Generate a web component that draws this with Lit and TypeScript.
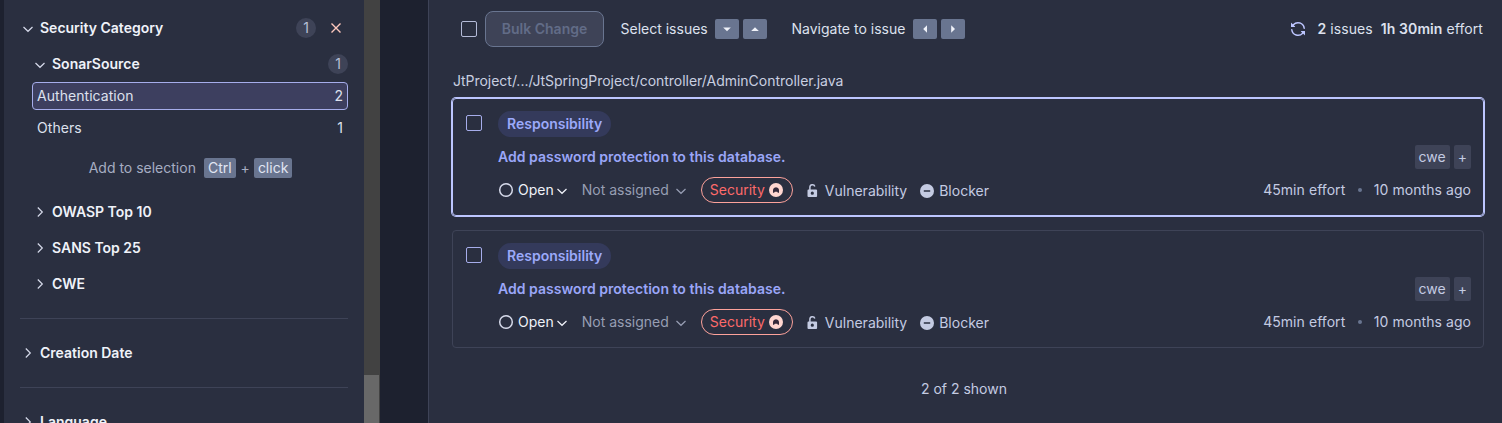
import { LitElement, html, css, svg } from "lit";
import { customElement, property } from "lit/decorators.js";

const down = html`<svg class="chev" width="12" height="12" viewBox="0 0 12 12"><path d="M1.5 4 6 8.3 10.5 4" fill="none" stroke="currentColor" stroke-width="1.2"/></svg>`;
const right = html`<svg class="chev" width="12" height="12" viewBox="0 0 12 12"><path d="M3.8 1.5 8.3 6 3.8 10.5" fill="none" stroke="currentColor" stroke-width="1.2"/></svg>`;
const arrow = (d: string) => html`<svg width="12" height="12" viewBox="0 0 12 12">${svg`<path d=${d} fill="#eff2f9"/>`}</svg>`;

const base = css`
  * { box-sizing: border-box; }
  svg { display: block; flex: none; }
  .row { display: flex; align-items: center; }
  .grow { flex: 1; }
  b { font-weight: 600; }
  .box { width: 16px; height: 16px; border: 1px solid #b4bbd8; border-radius: 2px; flex: none; }
`;

@customElement("facet-panel")
class FacetPanel extends LitElement {
  static styles = [base, css`
    :host { display: block; width: 360px; height: 423px; overflow: hidden; padding: 16px 16px 0; background: #2a2f40; color: #eff2f9; }
    .head { height: 24px; padding-left: 2px; gap: 6px; font-weight: 600; }
    .chev { color: #d5d9e9; }
    .down { margin-top: 2px; }
    .sub { margin-left: 12px; }
    .first { margin-top: 12px; }
    .count { width: 20px; height: 20px; border-radius: 50%; background: #3e4357; color: #b7bfd6; font-weight: 400; display: flex; align-items: center; justify-content: center; }
    .close { margin: 0 6px 0 8px; }
    .item { height: 28px; margin-left: 12px; padding: 0 4px; border: 1px solid transparent; border-radius: 4px; justify-content: space-between; color: #dde1ee; }
    .name { letter-spacing: 0.05px; }
    .selected { background: #3d3f5f; border-color: #a6adeb; margin-top: 6px; margin-bottom: 4px; }
    .hint { margin: 16px 0 22px 12px; height: 20px; justify-content: center; color: #a6adc2; }
    .key { height: 20px; line-height: 20px; padding: 0 4px; border-radius: 2px; background: #697590; color: #e1e6f3; }
    .key.first-key { margin: 0 5px 0 8px; }
    .key.last-key { margin-left: 4px; padding-right: 4px; margin-right: -1px; }
    .gap { margin-bottom: 12px; }
    .line { height: 1px; margin: 22px 0; background: #3e4357; }
  `];
  render() {
    return html`
      <div class="row head"><span class="down">${down}</span><span class="grow">Security Category</span><span class="count">1</span>
        <svg class="close" width="12" height="12" viewBox="0 0 12 12"><path d="m1.5 1.5 9 9m0-9-9 9" stroke="#fec8bd" stroke-width="1.4"/></svg></div>
      <div class="row head sub first"><span class="down">${down}</span><span class="grow">SonarSource</span><span class="count">1</span></div>
      <div class="row item selected"><span class="name">Authentication</span><span>2</span></div>
      <div class="row item"><span class="name">Others</span><span>1</span></div>
      <div class="row hint">Add to selection<span class="key first-key">Ctrl</span>+<span class="key last-key">click</span></div>
      <div class="row head sub gap">${right}<span>OWASP Top 10</span></div>
      <div class="row head sub gap">${right}<span>SANS Top 25</span></div>
      <div class="row head sub">${right}<span>CWE</span></div>
      <div class="line"></div>
      <div class="row head">${right}<span>Creation Date</span></div>
      <div class="line"></div>
      <div class="row head">${right}<span>Language</span></div>`;
  }
}

@customElement("issue-card")
class IssueCard extends LitElement {
  @property({ type: Boolean, reflect: true }) selected = false;
  static styles = [base, css`
    :host { display: flex; box-sizing: border-box; height: 118px; padding: 12px 12px 0 13px; gap: 16px; border: 1px solid #3e4357; border-radius: 4px; }
    :host([selected]) { border-color: #bdc6ff; box-shadow: 0 0 0 1px #bdc6ff; }
    .box { margin-top: 4px; border-color: #a6adeb; }
    .body { flex: 1; }
    .pill { display: inline-flex; align-items: center; height: 26px; padding: 0 9px; border-radius: 13px; background: #343a5b; color: #9ba9fa; font-weight: 600; }
    .title { height: 24px; margin-top: 8px; color: #9aa6f8; font-weight: 600; letter-spacing: 0.03px; }
    .tags { gap: 4px; font-weight: 400; color: #c4cbe2; }
    .tag { height: 24px; line-height: 24px; padding: 0 4px; border-radius: 2px; background: #3e4357; }
    .meta { height: 26px; margin-top: 8px; color: #c4cbe2; }
    .chev { margin-top: 1px; }
    .open { color: #eff2f9; gap: 4px; }
    .open .chev { margin-left: -2px; }
    .assignee { color: #979eb3; gap: 6px; margin-left: 14px; }
    .security { height: 26px; margin-left: 14px; padding: 0 9px 0 8px; gap: 4px; border: 1px solid #fda29b; border-radius: 13px; color: #fd6a6a; }
    .kind { gap: 6px; margin-left: 13px; padding-top: 2px; }
    .kind + .kind { gap: 5px; margin-left: 13px; }
    .dot { width: 4px; height: 4px; border-radius: 50%; background: #697590; margin: 0 12px 0 12.5px; }
    .when { letter-spacing: 0.06px; }
  `];
  render() {
    return html`
      <span class="box"></span>
      <div class="body">
        <div class="row"><span class="pill">Responsibility</span></div>
        <div class="row title"><span class="grow">Add password protection to this database.</span>
          <span class="row tags"><span class="tag">cwe</span><span class="tag">+</span></span></div>
        <div class="row meta">
          <span class="row open"><svg width="16" height="16" viewBox="0 0 16 16"><circle cx="8" cy="8" r="6.3" fill="none" stroke="#d5d9e9" stroke-width="1.5"/></svg>Open${down}</span>
          <span class="row assignee">Not assigned${down}</span>
          <span class="row security">Security<svg width="14" height="14" viewBox="0 0 14 14"><circle cx="7" cy="7" r="7" fill="#ffd6d0"/><path d="M4 9.8V6.7Q4.3 4.2 7 4.2T10 6.7V9.8H8.9L8.2 8.7H5.8L5.1 9.8Z" fill="#35293a"/></svg></span>
          <span class="row kind"><svg width="13" height="16" viewBox="0 0 13 16"><path d="M3.9 7V4.2a2.5 2.5 0 0 1 4.9-.7" fill="none" stroke="#c4cbe2" stroke-width="1.5"/><path fill-rule="evenodd" d="M2.5 6.4h7.6a1 1 0 0 1 1 1v5.7a1 1 0 0 1-1 1H2.5a1 1 0 0 1-1-1V7.4a1 1 0 0 1 1-1Zm3.8 2.2a1.6 1.6 0 1 0 0 3.2 1.6 1.6 0 0 0 0-3.2Z" fill="#c4cbe2"/></svg>Vulnerability</span>
          <span class="row kind"><svg width="14" height="14" viewBox="0 0 14 14"><circle cx="7" cy="7" r="7" fill="#c4cbe2"/><path d="M3.8 7h6.4" stroke="#2a2f40" stroke-width="1.5"/></svg>Blocker</span>
          <span class="grow"></span><span class="when">45min effort</span><span class="dot"></span><span class="when">10 months ago</span>
        </div>
      </div>`;
  }
}

@customElement("app-root")
class AppRoot extends LitElement {
  static styles = [base, css`
    :host { display: flex; box-sizing: border-box; height: 423px; overflow: hidden; padding-left: 4px; background: #1d212f; font: 400 14px/20px Inter, "Liberation Sans", sans-serif; color: #dde1ee; }
    .scroll { width: 16px; background: #424242; display: flex; align-items: flex-end; }
    .thumb { width: 15px; height: 48px; background: #686868; }
    .main { flex: 1; margin-left: 48px; border-left: 1px solid #3e4357; background: #2a2f40; padding: 11px 18px 0 23px; }
    .tools { height: 36px; padding-left: 9px; }
    .bulk { width: 119px; height: 36px; margin: 0 16.5px 0 8px; display: flex; align-items: center; justify-content: center; border: 1px solid #697590; border-radius: 8px; background: #3e4357; color: #626c87; font-weight: 600; }
    .keys { gap: 4px; margin-left: 7.5px; }
    .key { display: flex; align-items: center; justify-content: center; width: 24px; height: 20px; background: #697590; border-radius: 2px; }
    .nav { margin-left: 24.3px; }
    .total { gap: 8px; color: #dde1ee; padding-right: 1px; letter-spacing: 0.08px; }
    .reload { margin-right: 4px; }
    .path { margin: 24px 0 7px 1px; color: #c9cfe0; letter-spacing: -0.02px; }
    .second { margin-top: 14px; }
    .shown { text-align: center; margin-top: 31px; padding-right: 8px; color: #c4cbe2; }
  `];
  render() {
    return html`
      <facet-panel></facet-panel>
      <div class="scroll"><div class="thumb"></div></div>
      <div class="main">
        <div class="row tools">
          <span class="box"></span><span class="bulk">Bulk Change</span>
          <span>Select issues</span>
          <span class="row keys"><span class="key">${arrow("M2.2 4.5h7.6L6 8.3Z")}</span><span class="key">${arrow("M2.2 8 6 4.2 9.8 8Z")}</span></span>
          <span class="nav">Navigate to issue</span>
          <span class="row keys"><span class="key">${arrow("M8 2.2v7.6L4.2 6Z")}</span><span class="key">${arrow("M4.2 2.2 8 6 4.2 9.8Z")}</span></span>
          <span class="grow"></span>
          <span class="row total"><svg class="reload" width="16" height="16" viewBox="0 0 16 16"><path fill="#bdc6ff" d="M1.705 8.005a.75.75 0 0 1 .834.656 5.5 5.5 0 0 0 9.592 2.97l-1.204-1.204a.25.25 0 0 1 .177-.427h3.646a.25.25 0 0 1 .25.25v3.646a.25.25 0 0 1-.427.177l-1.38-1.38A7.002 7.002 0 0 1 1.05 8.84a.75.75 0 0 1 .656-.834ZM8 2.5a5.487 5.487 0 0 0-4.131 1.869l1.204 1.204A.25.25 0 0 1 4.896 6H1.25A.25.25 0 0 1 1 5.75V2.104a.25.25 0 0 1 .427-.177l1.38 1.38A7.002 7.002 0 0 1 14.95 7.16a.75.75 0 0 1-1.49.178A5.5 5.5 0 0 0 8 2.5Z"/></svg><span><b>2</b> issues</span><span><b>1h 30min</b> effort</span></span>
        </div>
        <div class="path">JtProject/.../JtSpringProject/controller/AdminController.java</div>
        <issue-card selected></issue-card>
        <issue-card class="second"></issue-card>
        <div class="shown">2 of 2 shown</div>
      </div>`;
  }
}
